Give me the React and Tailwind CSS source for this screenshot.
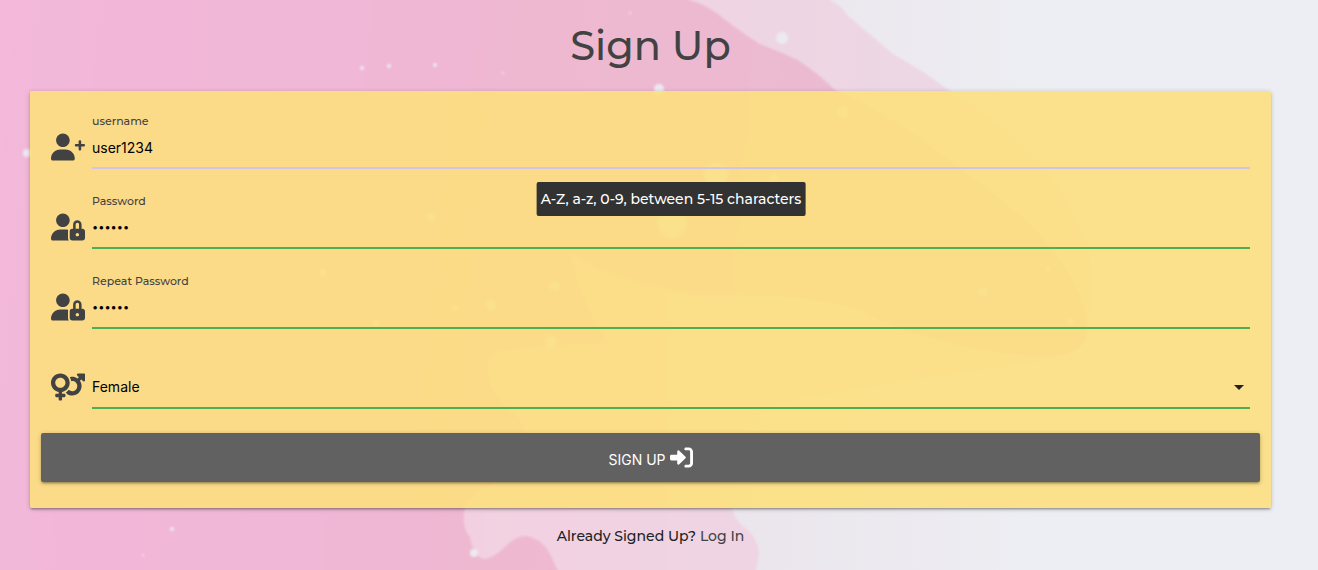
import React from "react";

const SPECKS = [
  [782, 38, 6], [659, 89, 5], [362, 68, 2], [389, 66, 2], [435, 65, 2], [503, 73, 1],
  [630, 13, 1], [474, 553, 4], [172, 529, 2], [143, 555, 1], [27, 153, 4],
  [716, 175, 12], [774, 178, 5], [672, 224, 14], [843, 112, 6], [555, 286, 5],
  [491, 305, 5], [455, 308, 3], [551, 342, 6], [983, 292, 5], [1048, 269, 3],
  [1071, 322, 4], [431, 217, 4], [323, 273, 3], [376, 323, 3],
];

function Backdrop() {
  return (
    <svg
      className="absolute inset-0 -z-10 h-full w-full"
      viewBox="0 0 1318 570"
      preserveAspectRatio="xMidYMid slice"
      aria-hidden="true"
    >
      <defs>
        <linearGradient id="pink" gradientUnits="userSpaceOnUse" x1="0" y1="0" x2="900" y2="80">
          <stop offset="0" stopColor="#f3b8da" />
          <stop offset="0.4" stopColor="#f1b7d6" />
          <stop offset="0.6" stopColor="#eeb8d1" />
          <stop offset="1" stopColor="#eabbd2" />
        </linearGradient>
        <linearGradient id="blush" gradientUnits="userSpaceOnUse" x1="465" y1="0" x2="950" y2="0">
          <stop offset="0" stopColor="#f3d0e1" />
          <stop offset="1" stopColor="#ecd8e4" />
        </linearGradient>
        <linearGradient id="pale" gradientUnits="userSpaceOnUse" x1="730" y1="0" x2="1050" y2="0">
          <stop offset="0" stopColor="#ebe5ec" />
          <stop offset="1" stopColor="#edeef3" />
        </linearGradient>
        <filter id="soften">
          <feGaussianBlur stdDeviation="1" />
        </filter>
      </defs>
      <rect width="1318" height="570" fill="url(#pale)" />
      <g filter="url(#soften)">
        <path
          fill="url(#blush)"
          d="M400-10H822L830 0Q842 6 848 16Q870 34 893 54Q922 70 950 91Q1060 160 1085 240Q1110 330 1050 360Q900 380 780 400Q700 440 731 506Q735 522 748 530Q762 545 758 560L754 580H400Z"
        />
        <path
          fill="url(#pink)"
          d="M-10-10H672L690 0Q708 5 723 18Q745 35 760 44Q776 50 798 60Q820 75 835 90Q900 120 960 170Q1080 250 1088 330Q1085 358 1040 356Q940 350 860 310Q800 290 700 295Q600 280 572 254Q580 300 610 345Q540 345 496 353Q475 375 510 410Q545 430 500 480Q470 495 465 508Q461 526 470 537Q474 557 484 559Q492 559 505 547Q515 536 526 536Q541 538 550 554L562 580H-10Z"
        />
      </g>
      <g fill="#eceaf1" filter="url(#soften)">
        {SPECKS.map(([x, y, r]) => (
          <circle key={`${x}-${y}`} cx={x} cy={y} r={r} />
        ))}
      </g>
    </svg>
  );
}

const USER_PLUS =
  "M224 256c70.7 0 128-57.31 128-128S294.7 0 224 0C153.3 0 96 57.31 96 128S153.3 256 224 256zM274.7 304H173.3C77.61 304 0 381.6 0 477.3C0 496.5 15.52 512 34.66 512h378.7C432.5 512 448 496.5 448 477.3C448 381.6 370.4 304 274.7 304zM616 200h-48v-48C568 138.8 557.3 128 544 128s-24 10.75-24 24v48h-48C458.8 200 448 210.8 448 224s10.75 24 24 24h48v48C520 309.3 530.7 320 544 320s24-10.75 24-24v-48h48C629.3 248 640 237.3 640 224S629.3 200 616 200z";

const USER_LOCK =
  "M592 288H576V212.7c0-41.84-30.02-80.04-71.66-84.27C456.5 123.6 416 161.1 416 208V288h-16C373.6 288 352 309.6 352 336v128c0 26.4 21.6 48 48 48h192c26.4 0 48-21.6 48-48v-128C640 309.6 618.4 288 592 288zM496 432c-17.62 0-32-14.38-32-32s14.38-32 32-32s32 14.38 32 32S513.6 432 496 432zM528 288h-64V208c0-17.62 14.38-32 32-32s32 14.38 32 32V288zM224 256c70.7 0 128-57.31 128-128S294.7 0 224 0C153.3 0 96 57.31 96 128S153.3 256 224 256zM320 336c0-8.672 1.738-16.87 4.303-24.7C308.6 306.6 291.9 304 274.7 304H173.3C77.61 304 0 381.7 0 477.3C0 496.5 15.52 512 34.66 512h301.7C326.3 498.6 320 482.1 320 464V336z";

const VENUS_MARS =
  "M256 384H208v-35.05C289.9 333.9 352 262.3 352 176c0-97.2-78.8-176-176-176c-97.2 0-176 78.8-176 176c0 86.26 62.1 157.9 144 172.1V384H96c-8.836 0-16 7.162-16 16v32c0 8.836 7.164 16 16 16h48v48c0 8.836 7.164 16 16 16h32c8.838 0 16-7.164 16-16v-48H256c8.838 0 16-7.164 16-16v-32C272 391.2 264.8 384 256 384zM176 272c-52.93 0-96-43.07-96-96c0-52.94 43.07-96 96-96c52.94 0 96 43.06 96 96C272 228.9 228.9 272 176 272zM624 0h-112.4c-21.38 0-32.09 25.85-16.97 40.97l29.56 29.56l-24.55 24.55c-29.97-20.66-64.81-31.05-99.74-31.05c-15.18 0-30.42 2.225-45.19 6.132c13.55 22.8 22.82 48.36 26.82 75.67c6.088-1.184 12.27-1.785 18.45-1.785c24.58 0 49.17 9.357 67.88 28.07c37.43 37.43 37.43 98.33 0 135.8c-18.71 18.71-43.3 28.07-67.88 28.07c-23.55 0-46.96-8.832-65.35-26.01c-15.92 18.84-34.93 35.1-56.75 47.35c11.45 5.898 20.17 16.3 23.97 28.82C331.5 406 365.7 416 400 416c45.04 0 90.08-17.18 124.5-51.55c60.99-60.99 67.73-155.6 20.47-224.1l24.55-24.55l29.56 29.56c4.889 4.889 10.9 7.078 16.8 7.078C628.2 152.4 640 142.8 640 128.4V16C640 7.164 632.8 0 624 0z";

const SIGN_IN =
  "M344.7 238.5l-144.1-136C193.7 95.97 183.4 94.17 174.6 97.95C165.8 101.8 160.1 110.4 160.1 120V192H32.02C14.33 192 0 206.3 0 224v64c0 17.68 14.33 32 32.02 32h128.1v72c0 9.578 5.707 18.25 14.51 22.05c8.803 3.781 19.03 1.984 26-4.594l144.1-136C354.3 264.4 354.3 247.6 344.7 238.5zM416 32h-64c-17.67 0-32 14.33-32 32s14.33 32 32 32h64c17.67 0 32 14.33 32 32v256c0 17.67-14.33 32-32 32h-64c-17.67 0-32 14.33-32 32s14.33 32 32 32h64c53.02 0 96-42.98 96-96V128C512 74.98 469 32 416 32z";

function Field({ id, label, icon, line, children }) {
  return (
    <div className="flex h-20 items-start gap-[7px]">
      <svg
        className="mt-5 h-7 w-[34px] shrink-0 text-[#424242]"
        viewBox="0 0 640 512"
        fill="currentColor"
        aria-hidden="true"
      >
        <path d={icon} />
      </svg>
      <div className="relative min-w-0 flex-1">
        <label htmlFor={id} className="block h-4 text-[11px] leading-4 font-medium text-[#424242]">
          {label}
        </label>
        <div className={`h-10 border-b-2 ${line}`}>{children}</div>
      </div>
    </div>
  );
}

const control =
  "block h-9 w-full appearance-none bg-transparent font-['Inter',sans-serif] text-black outline-none";

export default function App() {
  return (
    <main className="relative isolate min-h-screen overflow-hidden pr-[47px] pl-[30px] font-['Montserrat','Inter',sans-serif]">
      <Backdrop />
      <h1 className="pt-4 text-center text-[40px] leading-[60px] font-medium text-[#424242]">Sign Up</h1>

      <form
        className="mt-[15px] rounded-xs bg-[#fddf7e]/89 px-[11px] pt-[22px] pb-[26px] shadow-[0_2px_2px_0_rgba(0,0,0,0.14),0_3px_1px_-2px_rgba(0,0,0,0.12),0_1px_5px_0_rgba(0,0,0,0.2)]"
        onSubmit={(e) => e.preventDefault()}
      >
        <div className="px-[10px]">
          <Field id="username" label="username" icon={USER_PLUS} line="border-[#d1c4e9]">
            <input
              id="username"
              type="text"
              defaultValue="user1234"
              aria-describedby="username-hint"
              className={`${control} text-sm`}
            />
            <div
              id="username-hint"
              role="tooltip"
              className="absolute top-[69px] left-1/2 z-10 -translate-x-1/2 rounded-xs bg-[#323232] px-1 py-[7px] text-sm leading-5 font-medium whitespace-nowrap text-white"
            >
              A-Z, a-z, 0-9, between 5-15 characters
            </div>
          </Field>
          <Field id="password" label="Password" icon={USER_LOCK} line="border-[#4caf50]">
            <input id="password" type="password" defaultValue="abc123" className={`${control} text-[11px]`} />
          </Field>
          <Field id="repeat" label="Repeat Password" icon={USER_LOCK} line="border-[#4caf50]">
            <input id="repeat" type="password" defaultValue="abc123" className={`${control} text-[11px]`} />
          </Field>
          <Field id="gender" label="" icon={VENUS_MARS} line="border-[#4caf50]">
            <div className="relative">
              <select id="gender" aria-label="Gender" defaultValue="Female" className={`${control} text-sm`}>
                <option>Female</option>
                <option>Male</option>
              </select>
              <svg
                className="pointer-events-none absolute top-4 right-[6px] h-[5px] w-[10px] text-[#212121]"
                viewBox="0 0 10 5"
                fill="currentColor"
                aria-hidden="true"
              >
                <path d="M0 0h10L5 5z" />
              </svg>
            </div>
          </Field>
        </div>

        <button
          type="submit"
          className="flex h-[49px] w-full items-center justify-center gap-1 rounded-xs bg-[#616161] font-['Inter',sans-serif] text-sm text-white shadow-[0_2px_2px_0_rgba(0,0,0,0.14),0_3px_1px_-2px_rgba(0,0,0,0.12),0_1px_5px_0_rgba(0,0,0,0.2)]"
        >
          <span className="pt-1">SIGN UP</span>
          <svg className="h-[23px] w-[23px]" viewBox="0 0 512 512" fill="currentColor" aria-hidden="true">
            <path d={SIGN_IN} />
          </svg>
        </button>
      </form>

      <p className="mt-[18px] text-center text-sm leading-5 font-medium text-[#212121]">
        Already Signed Up?{" "}
        <a href="#login" className="text-[#424242]">
          Log In
        </a>
      </p>
    </main>
  );
}
